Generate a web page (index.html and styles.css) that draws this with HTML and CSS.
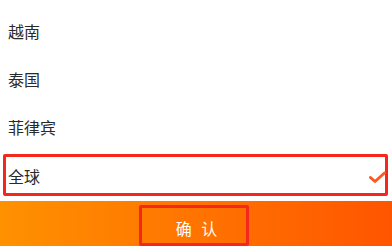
FILE: index.html
```html
<!DOCTYPE html>
<html lang="zh">
<head>
<meta charset="utf-8">
<link rel="stylesheet" href="styles.css">
</head>
<body>
<div class="page">
  <ul class="list">
    <li class="row">越南</li>
    <li class="row">泰国</li>
    <li class="row">菲律宾</li>
    <li class="row row-selected">
      <div class="sel-box">
        <span>全球</span>
        <svg class="check" width="17" height="13" viewBox="0 0 17 13"><polyline points="1.5,6.5 6,10.5 15.5,2" fill="none" stroke="#ff5722" stroke-width="3" stroke-linecap="round" stroke-linejoin="round"/></svg>
      </div>
    </li>
  </ul>
  <div class="bar">
    <button class="confirm">确 认</button>
  </div>
</div>
</body>
</html>
```
FILE: styles.css
```css
html, body {
  margin: 0;
  padding: 0;
  background: #ffffff;
}
body {
  font-family: "Noto Sans CJK SC", "Noto Sans", sans-serif;
  width: 392px;
  height: 246px;
  overflow: hidden;
}
.page {
  display: flex;
  flex-direction: column;
  height: 246px;
}
.list {
  list-style: none;
  margin: 0;
  padding: 7px 0 0 0;
}
.row {
  height: 48px;
  display: flex;
  align-items: center;
  padding-left: 8px;
  font-size: 16px;
  color: #2a2a2a;
}
.row-selected {
  height: 47px;
  padding: 0;
  display: block;
}
.sel-box {
  margin: 3px 4px 4px 3px;
  height: 34px;
  border: 3px solid #f5261c;
  border-radius: 2px;
  display: flex;
  align-items: center;
  justify-content: space-between;
  padding-left: 2px;
  padding-top: 2px;
}
.check {
  margin-right: -1px;
  margin-top: 2px;
}
.bar {
  flex: 1;
  background: linear-gradient(to right, #ff9100, #ff7400 50%, #ff5500);
  display: flex;
  justify-content: center;
  align-items: flex-start;
}
.confirm {
  margin-top: 4px;
  margin-right: 5px;
  width: 110px;
  height: 41px;
  border: 3px solid #f5261c;
  border-radius: 2px;
  background: transparent;
  color: #ffffff;
  font-family: "Noto Sans CJK SC", "Noto Sans", sans-serif;
  font-size: 16px;
  padding: 5px 0 0 9px;
  letter-spacing: 3px;
}
```
